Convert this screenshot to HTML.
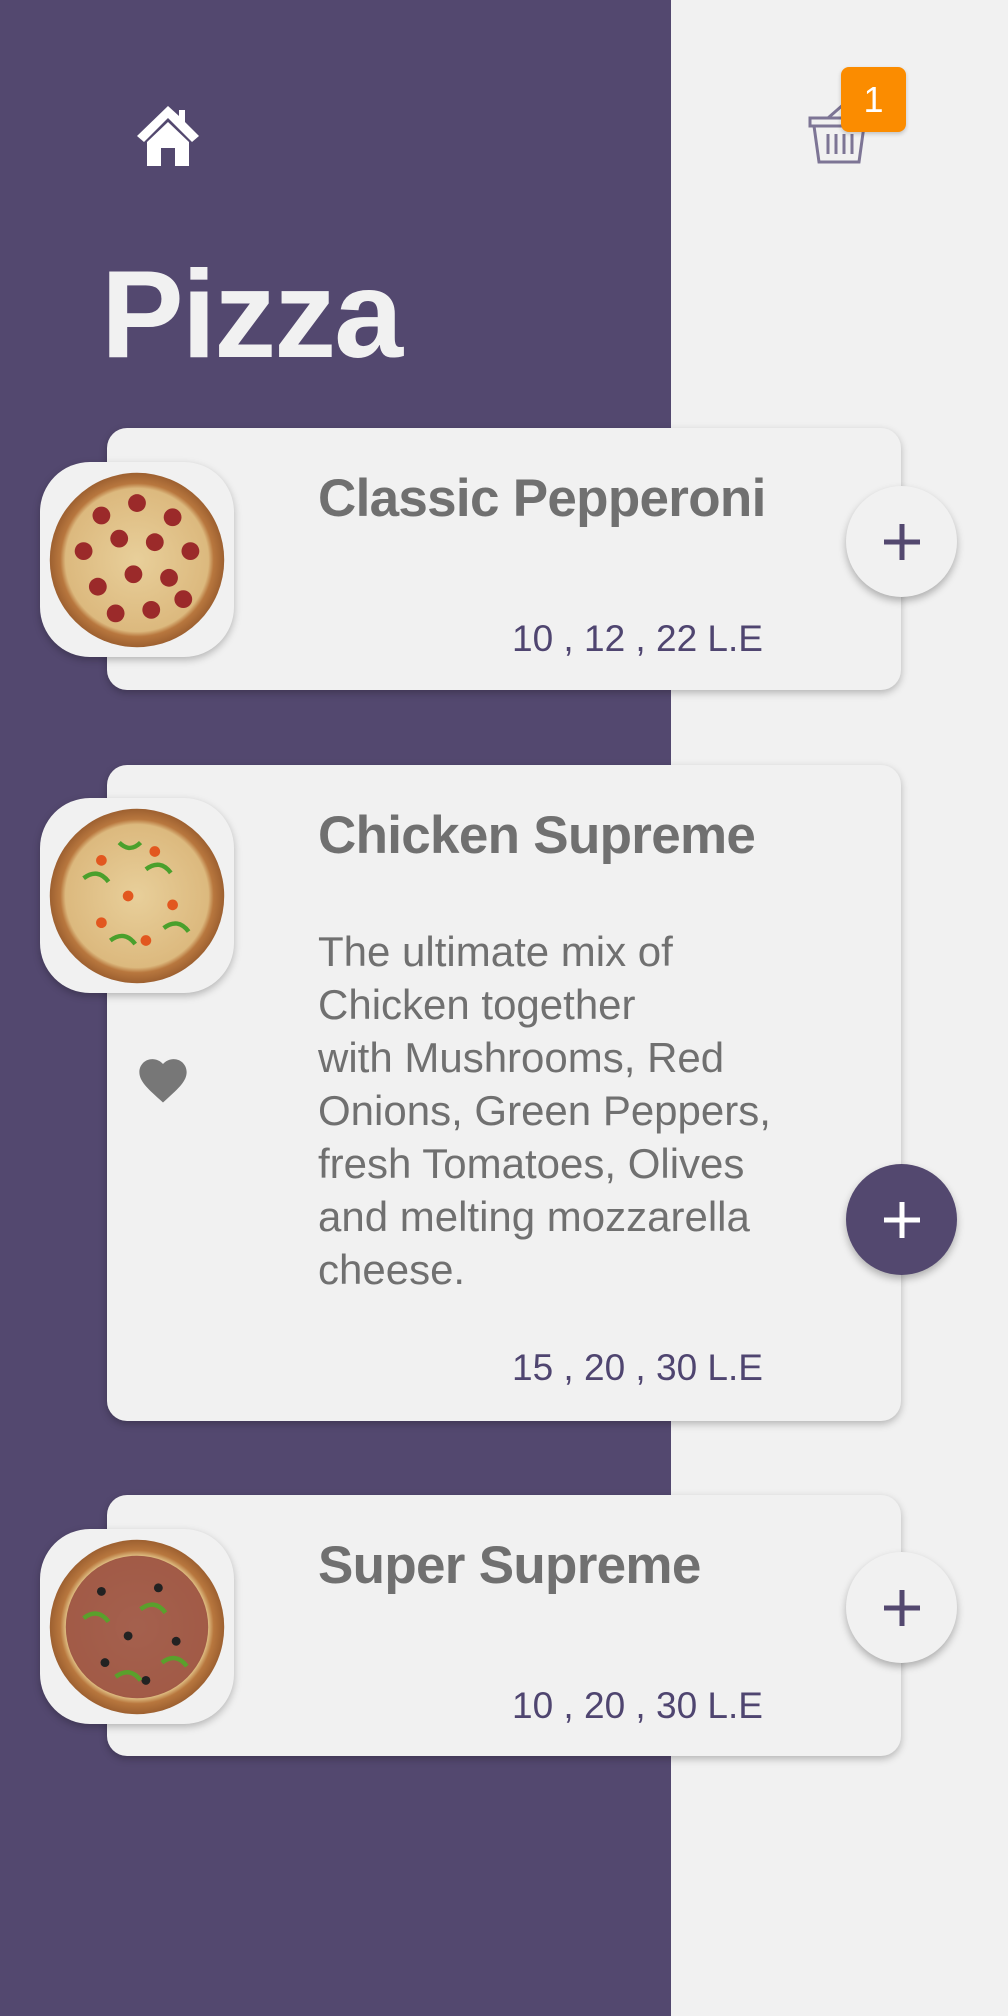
<!DOCTYPE html>
<html><head><meta charset="utf-8"><style>
*{margin:0;padding:0;box-sizing:border-box}
body{width:1008px;height:2016px;background:#f1f1f1;position:relative;overflow:hidden;font-family:"Liberation Sans",sans-serif}
.purple{position:absolute;left:0;top:0;width:671px;height:2016px;background:#53486f}
.card{position:absolute;left:107px;width:794px;background:#f1f1f1;border-radius:20px;box-shadow:0 3px 8px rgba(0,0,0,.25)}
.img{position:absolute;left:40px;width:194px;height:195px;background:#f1f1f1;border-radius:50px;box-shadow:0 3px 8px rgba(0,0,0,.25);display:flex;align-items:center;justify-content:center}
.t{position:absolute;left:318px;font-weight:bold;font-size:53px;color:#707070;white-space:nowrap;letter-spacing:-0.7px}
.p{position:absolute;left:512px;font-size:37px;color:#4f4570;white-space:nowrap}
.btn{position:absolute;left:846px;width:111px;height:111px;border-radius:50%;background:#f1f1f1;box-shadow:0 4px 8px rgba(0,0,0,.28);display:flex;align-items:center;justify-content:center}
.btn.f{background:#53486f}
.d{position:absolute;left:318px;top:925px;font-size:42px;line-height:53px;color:#707070;white-space:nowrap}
</style></head><body>
<div class="purple"></div>
<svg style="position:absolute;left:133px;top:102px" width="70" height="66" viewBox="0 0 70 66"><path d="M35 4 L4 34 L11 40 L35 16 L59 40 L66 34 L52 20 L52 8 L46 8 L46 14 Z" fill="#fff"/><path d="M14 40 L35 20 L56 40 L56 64 L42 64 L42 46 L28 46 L28 64 L14 64 Z" fill="#fff"/></svg>
<svg style="position:absolute;left:806px;top:100px" width="66" height="66" viewBox="0 0 66 66"><path d="M4 18 H62 V26 H4 Z M8 26 L13 62 H53 L58 26" fill="none" stroke="#7d7595" stroke-width="3"/><path d="M22 34 V54 M30 34 V54 M38 34 V54 M46 34 V54 M22 18 L38 4" stroke="#7d7595" stroke-width="3"/></svg>
<div style="position:absolute;left:841px;top:67px;width:65px;height:65px;background:#fb8c00;border-radius:8px;color:#fff;font-size:36px;text-align:center;line-height:65px;box-shadow:0 2px 4px rgba(0,0,0,.2)">1</div>
<div style="position:absolute;left:101px;top:244px;font-size:124px;font-weight:bold;color:#f1f1f1;letter-spacing:-2px">Pizza</div>

<div class="card" style="top:428px;height:262px"></div>
<div class="card" style="top:765px;height:656px"></div>
<div class="card" style="top:1495px;height:261px"></div>

<svg width="0" height="0" style="position:absolute"><defs>
<radialGradient id="pz"><stop offset="0" stop-color="#e8cf9a"/><stop offset=".82" stop-color="#dcb97e"/><stop offset=".88" stop-color="#b8773e"/><stop offset="1" stop-color="#9d6030"/></radialGradient></defs></svg>

<div class="img" style="top:462px"><svg width="178" height="178" viewBox="0 0 100 100"><circle cx="50" cy="50" r="49" fill="url(#pz)"/><g fill="#9b2a2a"><circle cx="30" cy="25" r="5"/><circle cx="50" cy="18" r="5"/><circle cx="70" cy="26" r="5"/><circle cx="20" cy="45" r="5"/><circle cx="40" cy="38" r="5"/><circle cx="60" cy="40" r="5"/><circle cx="80" cy="45" r="5"/><circle cx="28" cy="65" r="5"/><circle cx="48" cy="58" r="5"/><circle cx="68" cy="60" r="5"/><circle cx="38" cy="80" r="5"/><circle cx="58" cy="78" r="5"/><circle cx="76" cy="72" r="5"/></g></svg></div>
<div class="img" style="top:798px"><svg width="178" height="178" viewBox="0 0 100 100"><circle cx="50" cy="50" r="49" fill="url(#pz)"/><g fill="#e2571f"><circle cx="30" cy="30" r="3"/><circle cx="60" cy="25" r="3"/><circle cx="45" cy="50" r="3"/><circle cx="70" cy="55" r="3"/><circle cx="30" cy="65" r="3"/><circle cx="55" cy="75" r="3"/></g><g stroke="#4aa02c" stroke-width="2.5" fill="none"><path d="M20 40 q8 -6 14 2"/><path d="M55 35 q8 -6 14 2"/><path d="M35 75 q8 -6 14 2"/><path d="M65 68 q8 -6 14 2"/><path d="M40 20 q6 6 12 0"/></g></svg></div>
<div class="img" style="top:1529px"><svg width="178" height="178" viewBox="0 0 100 100"><circle cx="50" cy="50" r="49" fill="url(#pz)"/><circle cx="50" cy="50" r="40" fill="#8e3b34" opacity=".75"/><g fill="#222"><circle cx="30" cy="30" r="2.5"/><circle cx="62" cy="28" r="2.5"/><circle cx="45" cy="55" r="2.5"/><circle cx="72" cy="58" r="2.5"/><circle cx="32" cy="70" r="2.5"/><circle cx="55" cy="80" r="2.5"/></g><g stroke="#5aa02c" stroke-width="2.5" fill="none"><path d="M20 45 q8 -6 14 2"/><path d="M52 40 q8 -6 14 2"/><path d="M38 78 q8 -6 14 2"/><path d="M64 70 q8 -6 14 2"/></g></svg></div>

<div class="t" style="top:468px">Classic Pepperoni</div>
<div class="p" style="top:618px">10 , 12 , 22 L.E</div>
<div class="btn" style="top:486px"><svg width="44" height="44"><path d="M22 4V40M4 22H40" stroke="#53486f" stroke-width="5"/></svg></div>

<div class="t" style="top:805px">Chicken Supreme</div>
<div class="d">The ultimate mix of<br>Chicken together<br>with Mushrooms, Red<br>Onions, Green Peppers,<br>fresh Tomatoes, Olives<br>and melting mozzarella<br>cheese.</div>
<svg style="position:absolute;left:134px;top:1052px" width="58" height="52" viewBox="0 0 24 22"><path d="M12 21.35l-1.45-1.32C5.4 15.36 2 12.28 2 8.5 2 5.42 4.42 3 7.5 3c1.74 0 3.41.81 4.5 2.09C13.09 3.81 14.76 3 16.5 3 19.58 3 22 5.42 22 8.5c0 3.78-3.4 6.86-8.55 11.54L12 21.35z" fill="#777"/></svg>
<div class="p" style="top:1347px">15 , 20 , 30 L.E</div>
<div class="btn f" style="top:1164px"><svg width="44" height="44"><path d="M22 4V40M4 22H40" stroke="#fff" stroke-width="5"/></svg></div>

<div class="t" style="top:1535px">Super Supreme</div>
<div class="p" style="top:1685px">10 , 20 , 30 L.E</div>
<div class="btn" style="top:1552px"><svg width="44" height="44"><path d="M22 4V40M4 22H40" stroke="#53486f" stroke-width="5"/></svg></div>
</body></html>
